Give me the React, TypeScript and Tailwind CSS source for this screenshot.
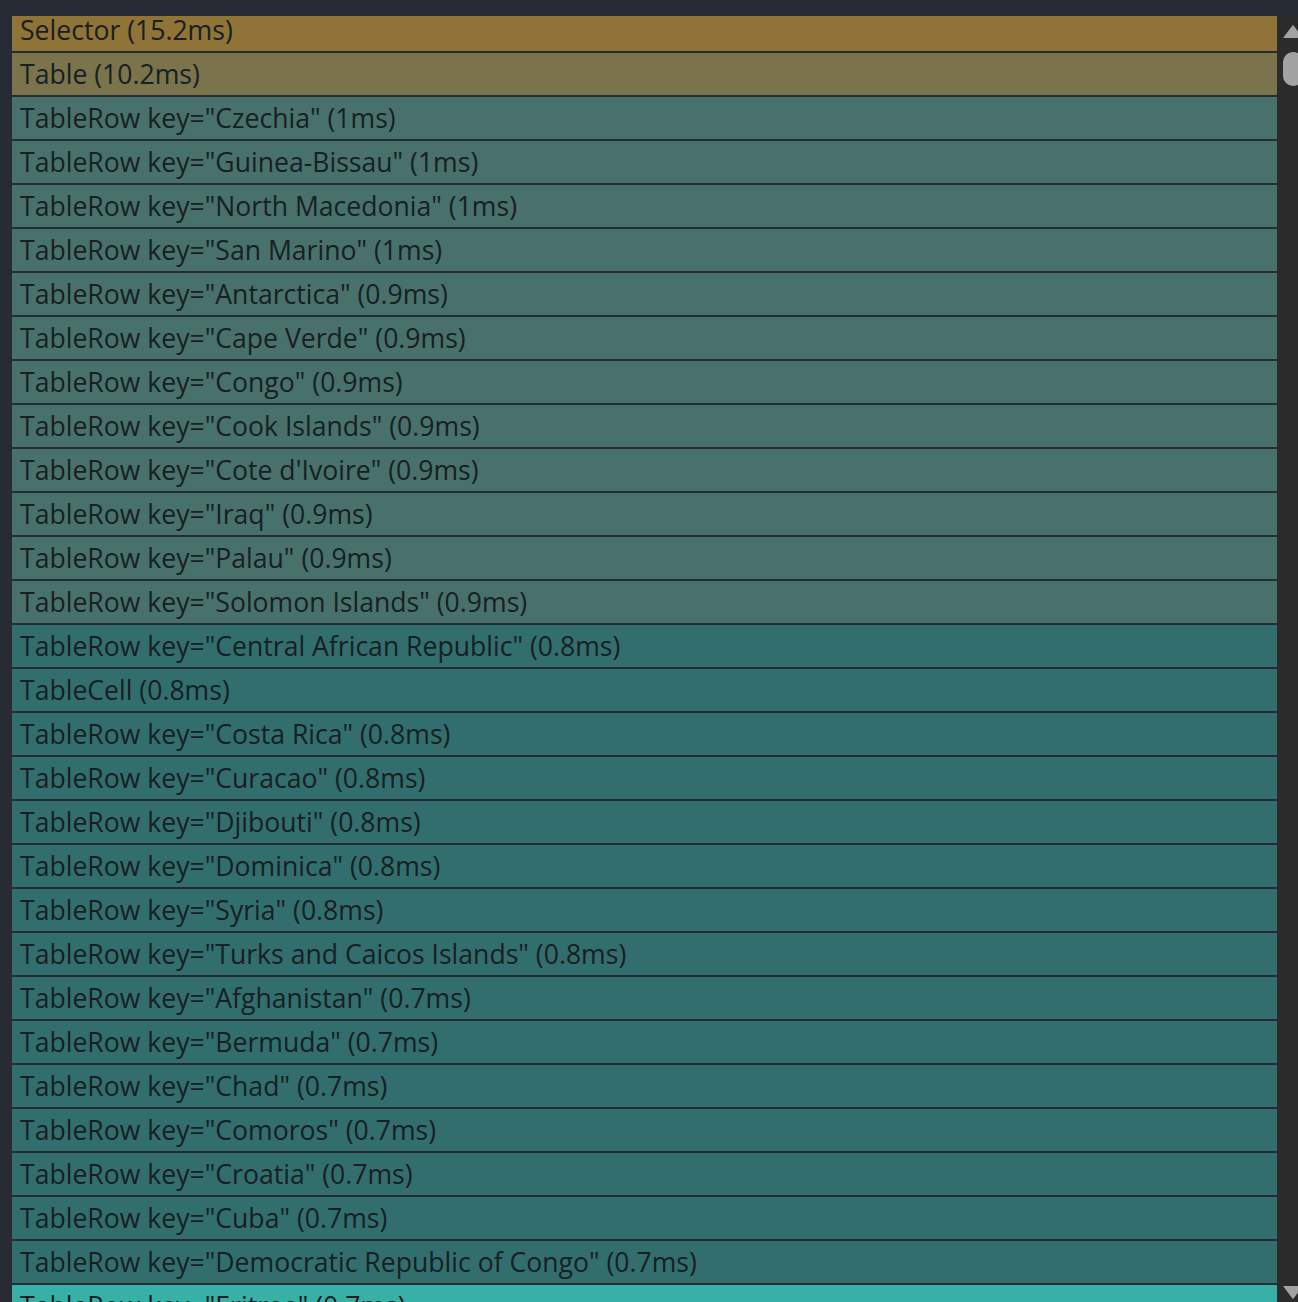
import React from "react";

type Row = { label: string; color: string };

const GOLD = "bg-[#8f7337]";
const OLIVE = "bg-[#7a734c]";
const SAGE = "bg-[#48716c]";
const TEAL = "bg-[#326e6e]";
const BRIGHT = "bg-[#37b0a8]";

const rows: Row[] = [
  { label: "Selector (15.2ms)", color: GOLD },
  { label: "Table (10.2ms)", color: OLIVE },
  { label: 'TableRow key="Czechia" (1ms)', color: SAGE },
  { label: 'TableRow key="Guinea-Bissau" (1ms)', color: SAGE },
  { label: 'TableRow key="North Macedonia" (1ms)', color: SAGE },
  { label: 'TableRow key="San Marino" (1ms)', color: SAGE },
  { label: 'TableRow key="Antarctica" (0.9ms)', color: SAGE },
  { label: 'TableRow key="Cape Verde" (0.9ms)', color: SAGE },
  { label: 'TableRow key="Congo" (0.9ms)', color: SAGE },
  { label: 'TableRow key="Cook Islands" (0.9ms)', color: SAGE },
  { label: "TableRow key=\"Cote d'Ivoire\" (0.9ms)", color: SAGE },
  { label: 'TableRow key="Iraq" (0.9ms)', color: SAGE },
  { label: 'TableRow key="Palau" (0.9ms)', color: SAGE },
  { label: 'TableRow key="Solomon Islands" (0.9ms)', color: SAGE },
  { label: 'TableRow key="Central African Republic" (0.8ms)', color: TEAL },
  { label: "TableCell (0.8ms)", color: TEAL },
  { label: 'TableRow key="Costa Rica" (0.8ms)', color: TEAL },
  { label: 'TableRow key="Curacao" (0.8ms)', color: TEAL },
  { label: 'TableRow key="Djibouti" (0.8ms)', color: TEAL },
  { label: 'TableRow key="Dominica" (0.8ms)', color: TEAL },
  { label: 'TableRow key="Syria" (0.8ms)', color: TEAL },
  { label: 'TableRow key="Turks and Caicos Islands" (0.8ms)', color: TEAL },
  { label: 'TableRow key="Afghanistan" (0.7ms)', color: TEAL },
  { label: 'TableRow key="Bermuda" (0.7ms)', color: TEAL },
  { label: 'TableRow key="Chad" (0.7ms)', color: TEAL },
  { label: 'TableRow key="Comoros" (0.7ms)', color: TEAL },
  { label: 'TableRow key="Croatia" (0.7ms)', color: TEAL },
  { label: 'TableRow key="Cuba" (0.7ms)', color: TEAL },
  { label: 'TableRow key="Democratic Republic of Congo" (0.7ms)', color: TEAL },
  { label: 'TableRow key="Eritrea" (0.7ms)', color: BRIGHT },
];

export default function App() {
  return (
    <div
      className="w-[1298px] h-[1302px] bg-[#272b34] pt-[16px] flex overflow-hidden"
      style={{ fontFamily: '"Open Sans", "Noto Sans", sans-serif' }}
    >
      <div className="w-[12px] shrink-0" />
      <div className="w-[1265px] shrink-0 h-full overflow-hidden">
        <div className="-mt-[7px] flex flex-col gap-[2px]">
          {rows.map((r, i) => (
            <div
              key={i}
              className={`${r.color} h-[42px] shrink-0 flex items-center pl-[8px] pt-[1px] text-[26.6px] leading-none text-[#172022] whitespace-nowrap`}
            >
              {r.label}
            </div>
          ))}
        </div>
      </div>
      <div className="w-[21px] shrink-0 h-full bg-[#2b2b2b] overflow-hidden flex flex-col pl-[6px]">
        <svg width="20" height="13" viewBox="0 0 20 13" className="mt-[9px] shrink-0">
          <path d="M1 13 L10 1 L19 13 Z" fill="#a3a3a3" strokeLinejoin="round" stroke="#a3a3a3" strokeWidth="1.5" />
        </svg>
        <div className="mt-[14px] w-[20px] h-[34px] rounded-full bg-[#a3a3a3] shrink-0" />
        <div className="flex-1" />
        <svg width="20" height="13" viewBox="0 0 20 13" className="mb-[3px] shrink-0">
          <path d="M1 0 L10 12 L19 0 Z" fill="#a3a3a3" strokeLinejoin="round" stroke="#a3a3a3" strokeWidth="1.5" />
        </svg>
      </div>
    </div>
  );
}
